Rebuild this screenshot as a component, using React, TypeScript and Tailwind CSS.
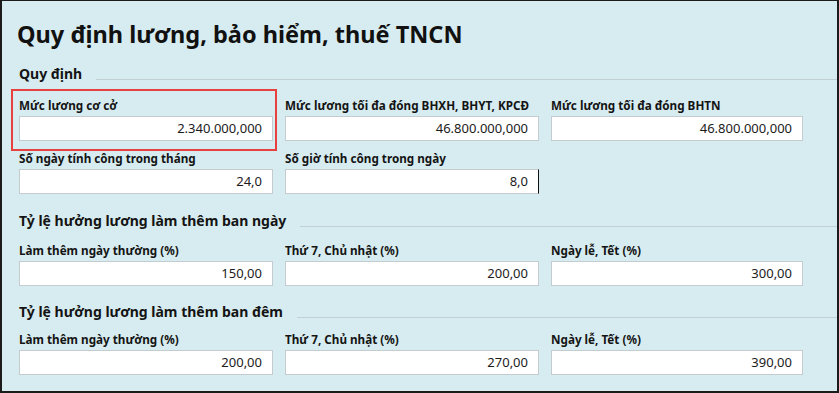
import React from "react";

type FieldProps = {
  label: string;
  value: string;
  highlight?: boolean;
  focused?: boolean;
};

function Field({ label, value, highlight, focused }: FieldProps) {
  return (
    <div className="relative flex flex-col">
      {highlight && (
        <div className="pointer-events-none absolute -left-[8px] -right-[4px] -top-[8px] -bottom-[10px] border-2 border-[#e8403f]" />
      )}
      <label className="h-[16px] whitespace-nowrap text-[11.7px] font-bold leading-[16px] text-[#141414]">
        {label}
      </label>
      <div
        className={
          "mt-[3px] flex h-[25px] items-center justify-end border border-[#c4cccf] bg-white pr-[10px] text-[13px] text-[#1c1c1c] " +
          (focused ? "border-r-[#111]" : "")
        }
      >
        {value}
      </div>
    </div>
  );
}

function SectionTitle({ title, className }: { title: string; className: string }) {
  return (
    <div className={"flex items-end gap-[14px] " + className}>
      <h2 className="h-[20px] whitespace-nowrap text-[14px] font-bold leading-[20px] text-[#141414]">
        {title}
      </h2>
      <div className="mb-[4px] h-px flex-1 bg-[#c2cfd3]" />
    </div>
  );
}

export default function App() {
  return (
    <div
      className="h-[393px] w-[839px] overflow-hidden border-b-2 border-l-2 border-r-2 border-t border-[#1b1b1b] bg-[#d7ecf0] pl-[17px] pt-[18px]"
      style={{ fontFamily: '"Noto Sans", "Open Sans", sans-serif' }}
    >
      <h1 className="-ml-[2px] text-[23.5px] font-bold leading-[30px] text-[#111]">
        Quy định lương, bảo hiểm, thuế TNCN
      </h1>

      <SectionTitle title="Quy định" className="mt-[15px]" />
      <div className="mt-[13px] grid grid-cols-[254px_254px_252px] gap-x-[12px] gap-y-[9px]">
        <Field label="Mức lương cơ cở" value="2.340.000,000" highlight />
        <Field label="Mức lương tối đa đóng BHXH, BHYT, KPCĐ" value="46.800.000,000" />
        <Field label="Mức lương tối đa đóng BHTN" value="46.800.000,000" />
        <Field label="Số ngày tính công trong tháng" value="24,0" />
        <Field label="Số giờ tính công trong ngày" value="8,0" focused />
      </div>

      <SectionTitle title="Tỷ lệ hưởng lương làm thêm ban ngày" className="mt-[17px]" />
      <div className="mt-[11px] grid grid-cols-[254px_254px_252px] gap-x-[12px]">
        <Field label="Làm thêm ngày thường (%)" value="150,00" />
        <Field label="Thứ 7, Chủ nhật (%)" value="200,00" />
        <Field label="Ngày lễ, Tết (%)" value="300,00" />
      </div>

      <SectionTitle title="Tỷ lệ hưởng lương làm thêm ban đêm" className="mt-[16px]" />
      <div className="mt-[9px] grid grid-cols-[254px_254px_252px] gap-x-[12px]">
        <Field label="Làm thêm ngày thường (%)" value="200,00" />
        <Field label="Thứ 7, Chủ nhật (%)" value="270,00" />
        <Field label="Ngày lễ, Tết (%)" value="390,00" />
      </div>
    </div>
  );
}
